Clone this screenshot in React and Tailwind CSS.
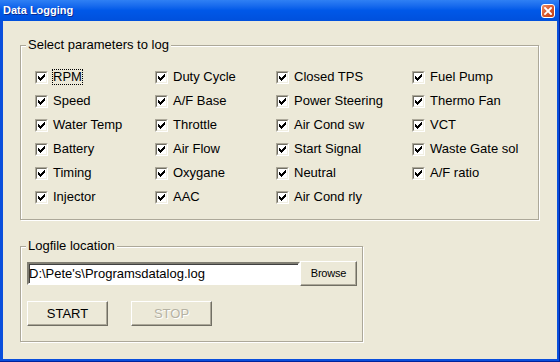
import React, { useState } from 'react';

const columns = [
  { width: 'w-[120px]', items: ['RPM', 'Speed', 'Water Temp', 'Battery', 'Timing', 'Injector'] },
  { width: 'w-[121px]', items: ['Duty Cycle', 'A/F Base', 'Throttle', 'Air Flow', 'Oxygane', 'AAC'] },
  { width: 'w-[136px]', items: ['Closed TPS', 'Power Steering', 'Air Cond sw', 'Start Signal', 'Neutral', 'Air Cond rly'] },
  { width: 'w-[120px]', items: ['Fuel Pump', 'Thermo Fan', 'VCT', 'Waste Gate sol', 'A/F ratio'] },
];

const CheckMark = () => (
  <svg width="7" height="7" viewBox="0 0 7 7" shapeRendering="crispEdges">
    <path
      fill="#000"
      d="M6 0h1v1h-1z M5 1h2v1h-2z M0 2h1v1h-1z M4 2h3v1h-3z M0 3h2v1h-2z M3 3h3v1h-3z M0 4h5v1h-5z M1 5h3v1h-3z M2 6h1v1h-1z"
    />
  </svg>
);

const CheckBox = ({ checked }) => (
  <span className="block w-[13px] h-[13px] shrink-0 border border-t-[#aca899] border-l-[#aca899] border-r-white border-b-white">
    <span className="flex items-center justify-center w-full h-full bg-white border border-t-[#716f64] border-l-[#716f64] border-r-[#f1efe2] border-b-[#f1efe2]">
      {checked && <CheckMark />}
    </span>
  </span>
);

const Param = ({ label, checked, focused, onToggle }) => (
  <div className="h-[24px] flex items-center gap-[4px] cursor-default select-none" onClick={onToggle}>
    <CheckBox checked={checked} />
    <span
      className={`leading-[14px] px-0 border ${
        focused ? 'border-dotted border-black' : 'border-transparent'
      }`}
    >
      {label}
    </span>
  </div>
);

const ClassicButton = ({ children, disabled, className }) => (
  <button
    disabled={disabled}
    className={`flex items-center justify-center bg-[#ece9d8] border border-t-white border-l-white border-r-[#716f64] border-b-[#716f64] [box-shadow:inset_-1px_-1px_0_#aca899] ${
      disabled ? 'text-[#b5b2a4] [text-shadow:1px_1px_0_#fff]' : 'text-black'
    } ${className}`}
  >
    {children}
  </button>
);

const GroupBox = ({ title, className, children }) => (
  <fieldset
    className={`border border-[#aca899] [box-shadow:1px_1px_0_#fff,inset_1px_1px_0_#fff] ${className}`}
  >
    <legend className="ml-[5px] px-[2px] text-[13px] leading-[16px] bg-[#ece9d8]">{title}</legend>
    {children}
  </fieldset>
);

export default function App() {
  const [checked, setChecked] = useState(() => {
    const s = {};
    columns.forEach((c) => c.items.forEach((i) => (s[i] = true)));
    return s;
  });

  const toggle = (name) => setChecked((s) => ({ ...s, [name]: !s[name] }));

  return (
    <div className="w-[560px] h-[362px] flex flex-col bg-[#0a4fdc] border-r border-b border-[#00229a] font-['Liberation_Sans',Arial,sans-serif] text-[13px] text-black">
      {/* title bar */}
      <div className="h-[21px] shrink-0 flex items-center justify-between pl-[3px] pr-[4px] bg-gradient-to-b from-[#2f80f4] via-[#0058e8] to-[#0050dc]">
        <span className="text-white font-bold text-[11px] leading-none [text-shadow:1px_1px_0_#0b2a94]">
          Data Logging
        </span>
        <span className="w-[14px] h-[14px] flex items-center justify-center rounded-[3px] border border-white bg-gradient-to-br from-[#ec8e66] via-[#d9582c] to-[#bf3f16]">
          <svg width="8" height="8" viewBox="0 0 8 8">
            <path d="M1 1L7 7M7 1L1 7" stroke="#fff" strokeWidth="1.9" strokeLinecap="square" />
          </svg>
        </span>
      </div>

      {/* client area */}
      <div className="flex-1 ml-[3px] mr-[2px] mb-[2px] bg-[#ece9d8] flex flex-col items-start pl-[17px] pt-[16px]">
        <GroupBox title="Select parameters to log" className="w-[519px]">
          <div className="flex pt-[12px] pb-[10px] pl-[14px]">
            {columns.map((col, ci) => (
              <div key={ci} className={`flex flex-col ${col.width}`}>
                {col.items.map((item) => (
                  <Param
                    key={item}
                    label={item}
                    checked={checked[item]}
                    focused={item === 'RPM'}
                    onToggle={() => toggle(item)}
                  />
                ))}
              </div>
            ))}
          </div>
        </GroupBox>

        <GroupBox title="Logfile location" className="w-[343px] mt-[18px]">
          <div className="flex flex-col pt-[7px] pb-[15px] pl-[6px]">
            <div className="flex items-center h-[25px]">
              <input
                readOnly
                defaultValue={"D:\\Pete's\\Programsdatalog.log"}
                className="w-[273px] h-[23px] bg-white px-0 text-[13px] outline-none border-2 border-t-[#7f7d72] border-l-[#7f7d72] border-r-white border-b-white [box-shadow:inset_1px_1px_0_#404040]"
              />
              <ClassicButton className="w-[57px] h-[25px] text-[11px] tracking-[-0.2px]">Browse</ClassicButton>
            </div>
            <div className="flex gap-[23px] mt-[15px]">
              <ClassicButton className="w-[81px] h-[25px]">START</ClassicButton>
              <ClassicButton className="w-[81px] h-[25px]" disabled>
                STOP
              </ClassicButton>
            </div>
          </div>
        </GroupBox>
      </div>
    </div>
  );
}
